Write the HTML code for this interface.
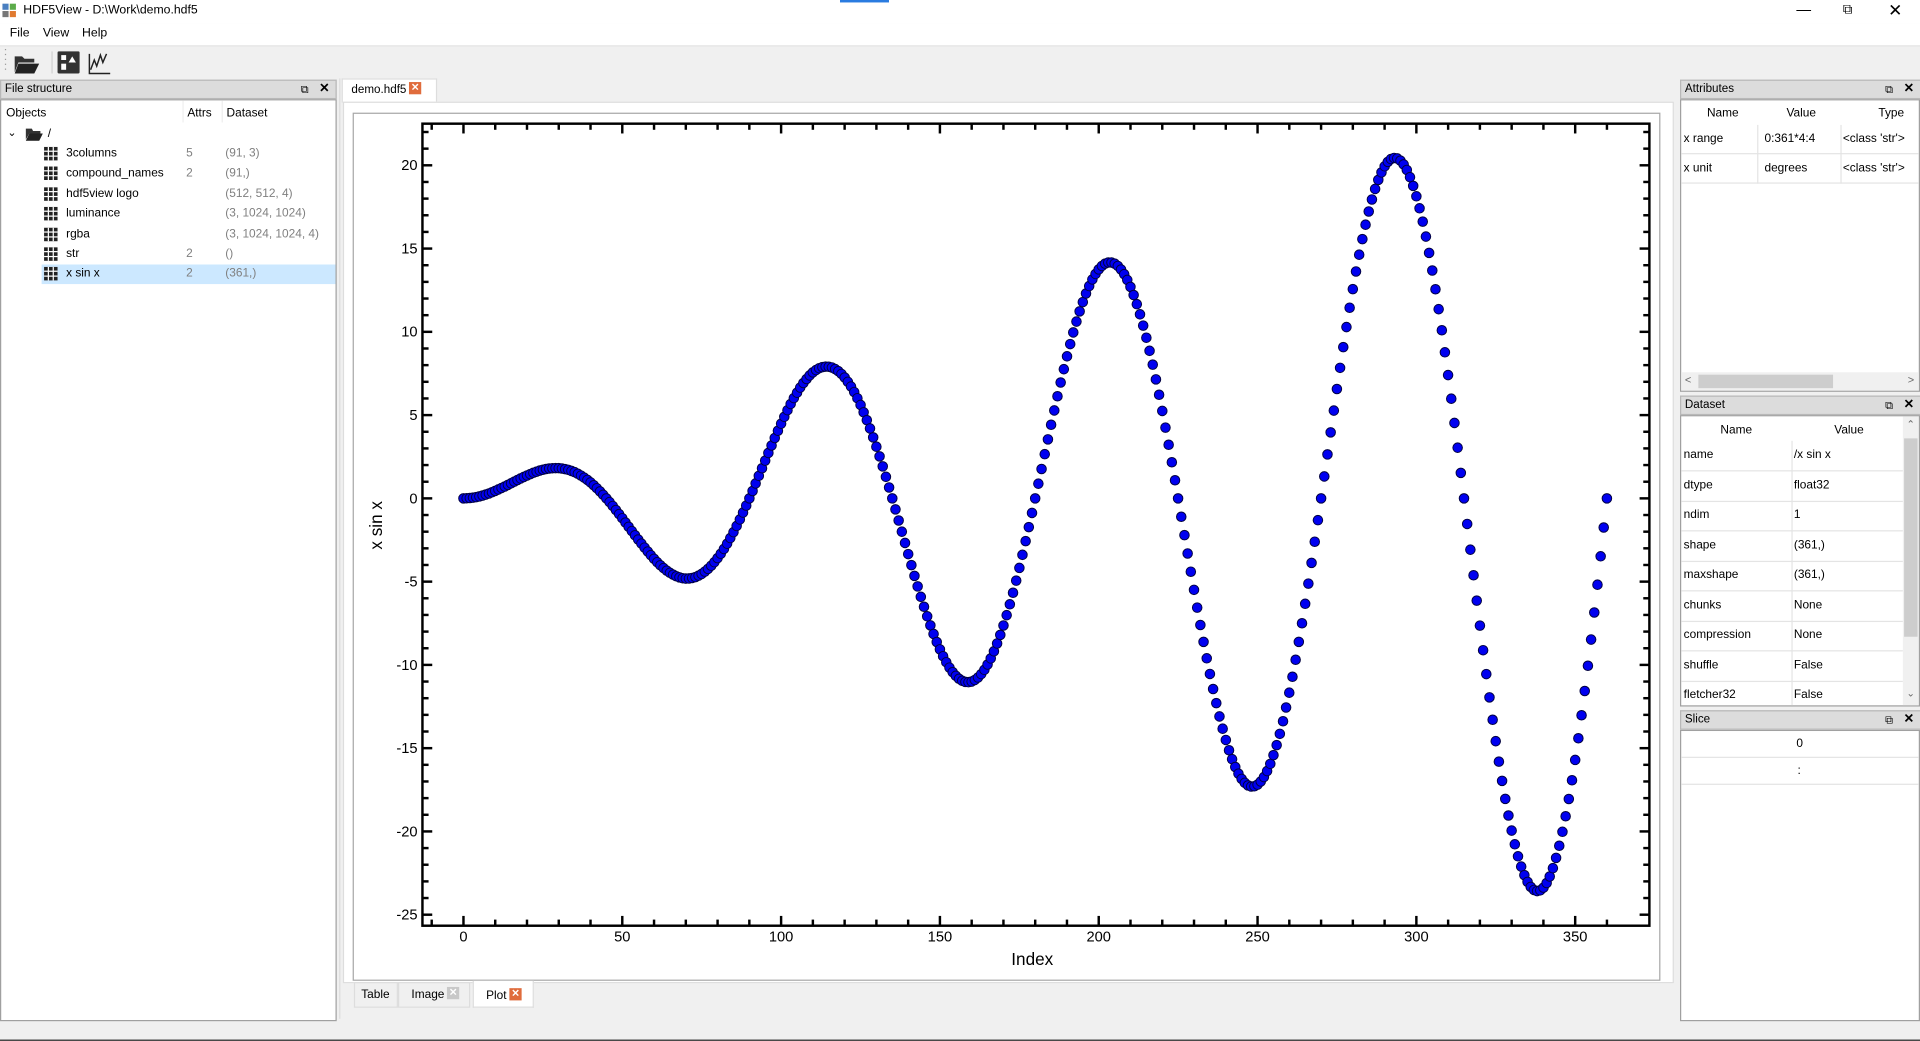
<!DOCTYPE html>
<html><head><meta charset="utf-8">
<style>
html,body{margin:0;padding:0;width:1920px;height:1041px;overflow:hidden;background:#f0f0f0;font-family:"Liberation Sans",sans-serif;}
#w{position:absolute;left:0;top:0;width:1568px;height:850px;transform:scale(1.22449);transform-origin:0 0;font-size:9.7px;color:#000;}
.a{position:absolute;}
.hdr{position:absolute;background:#dcdcdc;border:1px solid #b8b8b8;height:14px;line-height:14px;padding-left:3px;font-size:9.5px;}
.hdr .ic{position:absolute;right:22px;top:0;font-size:9px}
.hdr .x{position:absolute;right:5px;top:0;font-size:10px;font-weight:bold}
.box{position:absolute;background:#fff;border:1px solid #a0a0a0;}
.row{position:absolute;left:0;right:0;height:24px;border-bottom:1px solid #e4e4e4;line-height:24px;}
.gr{color:#808080}
.grid{display:inline-block;width:11px;height:11px;background:
linear-gradient(#fff,#fff) 3px 0/1px 11px no-repeat,linear-gradient(#fff,#fff) 7px 0/1px 11px no-repeat,
linear-gradient(#fff,#fff) 0 3px/11px 1px no-repeat,linear-gradient(#fff,#fff) 0 7px/11px 1px no-repeat,#222;}
</style></head><body><div id="w">
<div class="a" style="left:0;top:0;width:1568px;height:19px;background:#fff"></div>
<div class="a" style="left:2px;top:3px;width:12px;height:12px;">
<div class="a" style="left:0;top:0;width:5px;height:5px;background:#4a7fc0"></div><div class="a" style="left:6px;top:0;width:5px;height:5px;background:#5cab4a"></div>
<div class="a" style="left:0;top:6px;width:5px;height:5px;background:#777"></div><div class="a" style="left:6px;top:6px;width:5px;height:5px;background:#e07a30"></div></div>
<div class="a" style="left:19px;top:3px;font-size:10px">HDF5View - D:\Work\demo.hdf5</div>
<div class="a" style="left:686px;top:0;width:40px;height:2px;background:#2a7be0"></div>
<div class="a" style="left:1467px;top:1px;font-size:12px">&#8212;</div>
<div class="a" style="left:1505px;top:2px;font-size:11px">&#10697;</div>
<div class="a" style="left:1542px;top:0px;font-size:14px">&#10005;</div>
<div class="a" style="left:0;top:19px;width:1568px;height:18px;background:#fff"></div>
<div class="a" style="left:8px;top:22px;font-size:10px">File</div>
<div class="a" style="left:35px;top:22px;font-size:10px">View</div>
<div class="a" style="left:67px;top:22px;font-size:10px">Help</div>
<div class="a" style="left:0;top:37px;width:1568px;height:1px;background:#e3e3e3"></div>
<svg class="a" style="left:0;top:36px" width="110" height="26">
<g fill="#999"><rect x="4" y="4" width="1" height="1"/><rect x="4" y="8" width="1" height="1"/><rect x="4" y="12" width="1" height="1"/><rect x="4" y="16" width="1" height="1"/><rect x="4" y="20" width="1" height="1"/>
<rect x="47" y="10" width="1" height="1"/><rect x="47" y="14" width="1" height="1"/><rect x="47" y="18" width="1" height="1"/><rect x="47" y="22" width="1" height="1"/></g>
<rect x="42" y="6" width="1" height="18" fill="#d0d0d0"/>
<path d="M12 10h6l2 2h8v3H15l-3 8z" fill="#333"/><path d="M15 16h17l-4 8H12z" fill="#222"/>
<rect x="47" y="6" width="18" height="18" rx="1" fill="#333"/><rect x="50" y="9" width="4" height="4" fill="#fff"/><rect x="50" y="16" width="4" height="5" fill="#fff"/><path d="M56 15l3-5 3 5z" fill="#fff"/>
<path d="M73 8v16h17" fill="none" stroke="#222" stroke-width="1.2"/><path d="M74 21l3-8 2 5 3-9 2 6 3-7" fill="none" stroke="#222" stroke-width="1.2"/>
</svg>
<div class="hdr" style="left:0;top:65px;width:270px">File structure<span class="ic">&#10697;</span><span class="x">&#10005;</span></div>
<div class="box" style="left:0;top:81px;width:273px;height:751px">
<div class="a" style="left:4px;top:5px">Objects</div><div class="a" style="left:152px;top:5px">Attrs</div><div class="a" style="left:184px;top:5px">Dataset</div>
<div class="a" style="left:148px;top:0;width:1px;height:18px;background:#eee"></div><div class="a" style="left:180px;top:0;width:1px;height:18px;background:#eee"></div>
<div class="a" style="left:5px;top:21px;font-size:9px">&#8964;</div>
<svg class="a" style="left:20px;top:22px" width="14" height="11"><path d="M0 1h5l1 2h6v2H3L0 10z" fill="#333"/><path d="M3 5h11l-3 6H0z" fill="#222"/></svg>
<div class="a" style="left:38px;top:22px">/</div>
<div class="a" style="left:33px;top:134px;width:240px;height:16px;background:#cce8ff"></div>
</div>
<div id="tree"></div>
<div class="a" style="left:277px;top:64px;width:1089px;height:768px;background:#f0f0f0;border-left:1px solid #dcdcdc"></div>
<div class="a" style="left:279px;top:64px;width:76px;height:19px;background:#fff;border:1px solid #ddd;border-bottom:none"></div>
<div class="a" style="left:287px;top:68px;font-size:9.5px">demo.hdf5</div>
<div class="a" style="left:334px;top:67px;width:10px;height:10px;background:#e06c3c;color:#fff;font-size:8px;line-height:10px;text-align:center;font-weight:bold">&#10005;</div>
<div class="a" style="left:280px;top:83px;width:1085px;height:718px;background:#fff;border:1px solid #ddd"></div>
<div class="a" style="left:288px;top:92px;width:1066px;height:707px;background:#fff;border:1px solid #a8a8a8"></div>
<svg id="plot" class="a" style="left:0;top:0" width="1568" height="850"></svg>
<div class="a" style="left:289px;top:802px;width:34px;height:19px;background:#f0f0f0;border:1px solid #ddd"></div>
<div class="a" style="left:295px;top:807px">Table</div>
<div class="a" style="left:325px;top:802px;width:57px;height:19px;background:#f0f0f0;border:1px solid #ddd"></div>
<div class="a" style="left:336px;top:807px">Image</div>
<div class="a" style="left:365px;top:806px;width:10px;height:10px;background:#c8c8c8;color:#fff;font-size:8px;line-height:10px;text-align:center;font-weight:bold">&#10005;</div>
<div class="a" style="left:386px;top:801px;width:48px;height:21px;background:#fff;border:1px solid #ddd;border-top:none"></div>
<div class="a" style="left:397px;top:808px">Plot</div>
<div class="a" style="left:416px;top:807px;width:10px;height:10px;background:#e06c3c;color:#fff;font-size:8px;line-height:10px;text-align:center;font-weight:bold">&#10005;</div>
<div class="hdr" style="left:1372px;top:65px;width:192px">Attributes<span class="ic">&#10697;</span><span class="x">&#10005;</span></div>
<div class="box" style="left:1372px;top:81px;width:194px;height:237px">
<div class="a" style="left:21px;top:5px">Name</div><div class="a" style="left:86px;top:5px">Value</div><div class="a" style="left:161px;top:5px">Type</div>
<div class="row" style="top:20px;height:23px"><span class="a" style="left:2px;top:0">x range</span><span class="a" style="left:68px;top:0">0:361*4:4</span><span class="a" style="left:132px;top:0">&lt;class 'str'&gt;</span></div>
<div class="row" style="top:44px;height:23px"><span class="a" style="left:2px;top:0">x unit</span><span class="a" style="left:68px;top:0">degrees</span><span class="a" style="left:132px;top:0">&lt;class 'str'&gt;</span></div>
<div class="a" style="left:62px;top:20px;width:1px;height:48px;background:#e4e4e4"></div><div class="a" style="left:130px;top:20px;width:1px;height:48px;background:#e4e4e4"></div>
<div class="a" style="left:0;top:222px;width:194px;height:15px;background:#f0f0f0"></div>
<div class="a" style="left:14px;top:224px;width:110px;height:11px;background:#cdcdcd"></div>
<div class="a" style="left:3px;top:223px;font-size:9px;color:#666">&lt;</div><div class="a" style="left:185px;top:223px;font-size:9px;color:#666">&gt;</div>
</div>
<div class="hdr" style="left:1372px;top:323px;width:192px">Dataset<span class="ic">&#10697;</span><span class="x">&#10005;</span></div>
<div class="box" style="left:1372px;top:339px;width:194px;height:236px;overflow:hidden">
<div class="a" style="left:32px;top:6px">Name</div><div class="a" style="left:125px;top:6px">Value</div>
<div id="ds"></div>
<div class="a" style="left:90px;top:20px;width:1px;height:216px;background:#e4e4e4"></div>
<div class="a" style="left:181px;top:0;width:13px;height:236px;background:#f0f0f0"></div>
<div class="a" style="left:182px;top:18px;width:11px;height:162px;background:#cdcdcd"></div>
<div class="a" style="left:184px;top:2px;font-size:8px;color:#666">&#8963;</div><div class="a" style="left:184px;top:222px;font-size:8px;color:#666">&#8964;</div>
</div>
<div class="hdr" style="left:1372px;top:580px;width:192px">Slice<span class="ic">&#10697;</span><span class="x">&#10005;</span></div>
<div class="box" style="left:1372px;top:596px;width:194px;height:236px">
<div class="row" style="top:0;height:21px;line-height:21px"><span class="a" style="left:94px">0</span></div>
<div class="row" style="top:22px;height:21px;line-height:21px"><span class="a" style="left:95px">:</span></div>
</div>
<div class="a" style="left:0;top:849px;width:1568px;height:1px;background:#222"></div>
</div>
<script>
var tree=document.getElementById('tree'),h='';
var items=[['3columns','5','(91, 3)'],['compound_names','2','(91,)'],['hdf5view logo','','(512, 512, 4)'],['luminance','','(3, 1024, 1024)'],['rgba','','(3, 1024, 1024, 4)'],['str','2','()'],['x sin x','2','(361,)']];
items.forEach(function(it,i){var y=120+i*16.4;
h+='<div class="a" style="left:36px;top:'+(y)+'px"><span class="grid"></span></div><div class="a" style="left:54px;top:'+y+'px">'+it[0]+'</div><div class="a gr" style="left:152px;top:'+y+'px">'+it[1]+'</div><div class="a gr" style="left:184px;top:'+y+'px">'+it[2]+'</div>';});
tree.innerHTML=h;
var ds=[['name','/x sin x'],['dtype','float32'],['ndim','1'],['shape','(361,)'],['maxshape','(361,)'],['chunks','None'],['compression','None'],['shuffle','False'],['fletcher32','False']];
h='';ds.forEach(function(d,i){h+='<div class="row" style="top:'+(20+i*24.5)+'px;right:13px"><span class="a" style="left:2px">'+d[0]+'</span><span class="a" style="left:92px">'+d[1]+'</span></div>';});
document.getElementById('ds').innerHTML=h;
var L=345,R=1347,T=101,B=756,s='';
function X(v){return 378.5+v*2.594;}function Y(v){return 407-v*13.6;}
s+='<rect x="'+L+'" y="'+T+'" width="'+(R-L)+'" height="'+(B-T)+'" fill="none" stroke="#000" stroke-width="2"/>';
for(var v=-10;v<=360;v+=10){var x=X(v);if(x<L||x>R)continue;var l=v%50==0?8:5;
s+='<line x1="'+x+'" y1="'+B+'" x2="'+x+'" y2="'+(B-l)+'" stroke="#000" stroke-width="2"/><line x1="'+x+'" y1="'+T+'" x2="'+x+'" y2="'+(T+l)+'" stroke="#000" stroke-width="2"/>';
if(v%50==0&&v>=0)s+='<text x="'+x+'" y="'+(B+13)+'" font-size="12" text-anchor="middle" font-family="Liberation Sans">'+v+'</text>';}
for(var v=-25;v<=22;v+=1){var y=Y(v);if(y<T||y>B)continue;var l=v%5==0?8:5;
s+='<line x1="'+L+'" y1="'+y+'" x2="'+(L+l)+'" y2="'+y+'" stroke="#000" stroke-width="2"/><line x1="'+R+'" y1="'+y+'" x2="'+(R-l)+'" y2="'+y+'" stroke="#000" stroke-width="2"/>';
if(v%5==0)s+='<text x="'+(L-4)+'" y="'+(y+4)+'" font-size="12" text-anchor="end" font-family="Liberation Sans">'+v+'</text>';}
s+='<text x="843" y="788" font-size="14" text-anchor="middle" font-family="Liberation Sans">Index</text>';
s+='<text transform="translate(312,429) rotate(-90)" font-size="14" text-anchor="middle" font-family="Liberation Sans">x sin x</text>';
for(var i=0;i<=360;i++){var t=i*4*Math.PI/180;var v=t*Math.sin(t);
s+='<circle cx="'+X(i).toFixed(1)+'" cy="'+Y(v).toFixed(1)+'" r="3.9" fill="#0000f0" stroke="#000040" stroke-width="0.8"/>';}
document.getElementById('plot').innerHTML=s;
</script>
</body></html>
